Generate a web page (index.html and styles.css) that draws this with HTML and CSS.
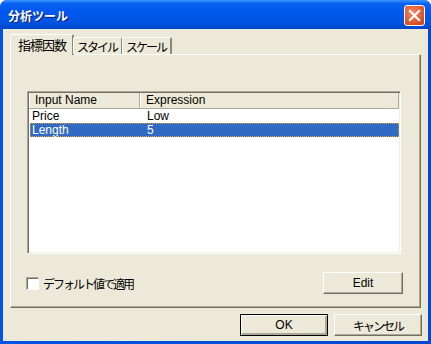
FILE: index.html
```html
<!DOCTYPE html>
<html lang="ja">
<head>
    <meta charset="UTF-8">
    <title>分析ツール</title>
    <link rel="stylesheet" href="styles.css">
</head>
<body>
    <div class="window">
        <div class="titlebar">
            <span class="title">分析ツール</span>
            <div class="close-btn">
                <svg width="13" height="13" viewBox="0 0 13 13">
                    <path d="M2 2 L11 11 M11 2 L2 11" stroke="#fff" stroke-width="2.2" stroke-linecap="square"/>
                </svg>
            </div>
        </div>

        <div class="client">
            <div class="tabs">
                <div class="tab active">指標因数</div>
                <div class="tab kana">スタイル</div>
                <div class="tab kana">スケール</div>
            </div>

            <div class="panel">
                <div class="listview">
                    <div class="lv-header">
                        <div class="col col-name">Input Name</div>
                        <div class="col col-expr">Expression</div>
                    </div>
                    <div class="lv-row">
                        <div class="cell cell-name">Price</div>
                        <div class="cell">Low</div>
                    </div>
                    <div class="lv-row selected">
                        <div class="cell cell-name">Length</div>
                        <div class="cell">5</div>
                    </div>
                </div>

                <div class="panel-footer">
                    <label class="check">
                        <span class="checkbox"></span>
                        <span class="kana">デフォルト値で適用</span>
                    </label>
                    <button class="btn btn-edit">Edit</button>
                </div>
            </div>

            <div class="dialog-buttons">
                <button class="btn btn-default">OK</button>
                <button class="btn"><span class="kana">キャンセル</span></button>
            </div>
        </div>
    </div>
</body>
</html>
```

FILE: styles.css
```css
body {
    margin: 0;
    font-family: "Liberation Sans", "Noto Sans CJK JP", sans-serif;
    font-size: 12px;
    background: #fff;
}
.window {
    width: 431px;
    height: 344px;
    display: flex;
    flex-direction: column;
    background: linear-gradient(to right, #0054e3, #0350d8 50%, #0048d0);
    border-radius: 7px 7px 0 0;
    overflow: hidden;
}
.titlebar {
    height: 29px;
    display: flex;
    align-items: center;
    justify-content: space-between;
    padding: 0 6px 0 8px;
    background: linear-gradient(to bottom, #3d95ff 0%, #0a62f0 12%, #0058ee 40%, #0055e5 75%, #0046c8 100%);
}
.title {
    color: #fff;
    font-family: "Noto Sans CJK JP", sans-serif;
    font-weight: bold;
    font-size: 12px;
    text-shadow: 1px 1px 0 #0a1e6e;
    padding-top: 1px;
}
.close-btn {
    width: 19px;
    height: 19px;
    border: 1px solid #fff;
    border-radius: 3px;
    background: radial-gradient(circle at 40% 35%, #f28a6c, #e45a32 55%, #c23d18);
    display: flex;
    align-items: center;
    justify-content: center;
    margin-top: 1px;
}
.client {
    flex: 1;
    margin: 0 3px 3px;
    background: #ece9d8;
    padding: 5px 7px 0 7px;
    display: flex;
    flex-direction: column;
}
.kana {
    font-family: "Noto Sans CJK JP", sans-serif;
    letter-spacing: -2px;
}
.tabs {
    display: flex;
    align-items: flex-end;
    height: 20px;
    position: relative;
    z-index: 1;
}
.tab {
    font-family: "Noto Sans CJK JP", sans-serif;
    font-size: 12px;
    height: 17px;
    line-height: 17px;
    padding: 0 4px 0 3px;
    background: #ece9d8;
    border-top: 1px solid #fff;
    border-left: 1px solid #fff;
    border-right: 2px solid #8a877c;
    border-radius: 2px 2px 0 0;
    box-sizing: border-box;
    margin-left: -1px;
}
.tab.active {
    height: 21px;
    line-height: 20px;
    font-size: 13px;
    padding: 0 6px 0 7px;
    margin-left: 0;
    margin-bottom: -1px;
    letter-spacing: -1px;
}
.panel {
    height: 254px;
    box-sizing: border-box;
    border-top: 1px solid #fff;
    border-left: 1px solid #fff;
    border-right: 1px solid #716f64;
    border-bottom: 1px solid #716f64;
    box-shadow: inset -1px -1px 0 #aca899;
    padding: 36px 19px 0 16px;
    display: flex;
    flex-direction: column;
}
.listview {
    height: 163px;
    box-sizing: border-box;
    background: #fff;
    border-top: 1px solid #aca899;
    border-left: 1px solid #aca899;
    border-right: 1px solid #fff;
    border-bottom: 1px solid #fff;
    box-shadow: inset 1px 1px 0 #716f64, inset -1px -1px 0 #f1efe2;
    padding: 1px 1px 0 1px;
}
.lv-header {
    display: flex;
    height: 16px;
    background: #ece9d8;
    border-bottom: 1px solid #aca899;
    box-sizing: border-box;
}
.col {
    line-height: 15px;
    padding-left: 5px;
    box-sizing: border-box;
    border-left: 1px solid #fff;
}
.col-name {
    width: 111px;
    border-right: 1px solid #aca899;
}
.col-expr {
    flex: 1;
    border-right: 1px solid #aca899;
}
.lv-row {
    display: flex;
    height: 14px;
    line-height: 14px;
    margin: 0 0 0 1px;
}
.cell {
    padding-left: 2px;
}
.cell-name {
    width: 113px;
}
.lv-row.selected {
    background: #316ac5;
    color: #fff;
    outline: 1px dotted #e0a030;
    outline-offset: -1px;
}
.panel-footer {
    display: flex;
    justify-content: space-between;
    align-items: center;
    margin-top: 18px;
}
.check {
    display: flex;
    align-items: center;
    gap: 4px;
    margin-left: -1px;
}
.checkbox {
    width: 13px;
    height: 13px;
    box-sizing: border-box;
    background: #fff;
    border-top: 1px solid #aca899;
    border-left: 1px solid #aca899;
    border-right: 1px solid #fff;
    border-bottom: 1px solid #fff;
    box-shadow: inset 1px 1px 0 #716f64;
}
.btn {
    font-family: "Liberation Sans", "Noto Sans CJK JP", sans-serif;
    font-size: 12px;
    width: 88px;
    height: 22px;
    padding: 0;
    background: #ece9d8;
    color: #000;
    border-top: 1px solid #fff;
    border-left: 1px solid #fff;
    border-right: 1px solid #716f64;
    border-bottom: 1px solid #716f64;
    box-shadow: inset -1px -1px 0 #aca899;
    border-radius: 0;
}
.btn-edit {
    width: 80px;
    margin-right: -2px;
}
.btn-default {
    border: 1px solid #000;
    box-shadow: inset 1px 1px 0 #fff, inset -2px -2px 0 #aca899;
}
.dialog-buttons {
    display: flex;
    justify-content: flex-end;
    gap: 6px;
    margin-top: 6px;
    margin-right: -1px;
}
```
